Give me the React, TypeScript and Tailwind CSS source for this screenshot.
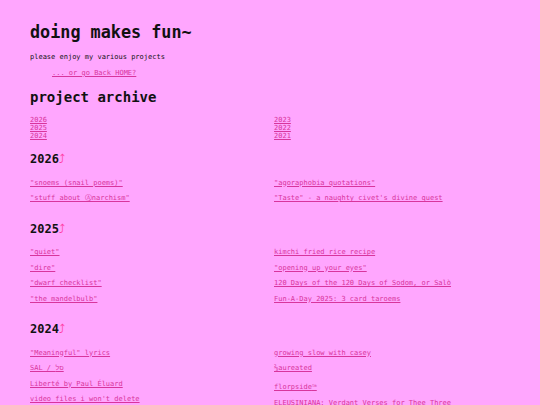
const link = 'text-[#d8359c] underline underline-offset-[1px] decoration-[1px]'

type Col = { text: React.ReactNode; extra?: string }[]

function YearSection({ year, left, right }: { year: string; left: Col; right: Col }) {
  return (
    <section className="mt-[19.5px]">
      <h2 className="text-[12px] leading-[14px] font-bold text-[#111]">
        {year}
        <a href="#top" className="text-[#ff3ea5] font-normal">⤴</a>
      </h2>
      <div className="mt-[12.5px] grid grid-cols-2 gap-x-[8px]">
        <ul className="flex flex-col gap-[7.5px]">
          {left.map((item, i) => (
            <li key={i} className={`text-[7px] leading-[8px] whitespace-nowrap ${item.extra ?? ''}`}>
              <a href="#" className={link}>{item.text}</a>
            </li>
          ))}
        </ul>
        <ul className="flex flex-col gap-[7.5px]">
          {right.map((item, i) => (
            <li key={i} className={`text-[7px] leading-[8px] whitespace-nowrap ${item.extra ?? ''}`}>
              <a href="#" className={link}>{item.text}</a>
            </li>
          ))}
        </ul>
      </div>
    </section>
  )
}

export default function App() {
  return (
    <div
      id="top"
      className="min-h-screen w-full bg-[#ffa6fe] px-[30px] pt-[22px] pb-10 text-[#111]"
      style={{ fontFamily: '"DejaVu Sans Mono", "Liberation Mono", monospace' }}
    >
      <h1 className="text-[16.8px] leading-[20px] font-bold">doing makes fun~</h1>
      <p className="mt-[11px] text-[7px] leading-[8px]">please enjoy my various projects</p>
      <p className="mt-[8px] pl-[22px] text-[7px] leading-[8px]">
        <a href="#" className={link}>... or go Back HOME?</a>
      </p>

      <h2 className="mt-[12px] text-[14px] leading-[16px] font-bold">project archive</h2>
      <div className="mt-[11px] grid grid-cols-2 gap-x-[8px] text-[7px] leading-[8px]">
        <div className="flex flex-col">
          <a href="#" className={`${link} w-fit`}>2026</a>
          <a href="#" className={`${link} w-fit`}>2025</a>
          <a href="#" className={`${link} w-fit`}>2024</a>
        </div>
        <div className="flex flex-col">
          <a href="#" className={`${link} w-fit`}>2023</a>
          <a href="#" className={`${link} w-fit`}>2022</a>
          <a href="#" className={`${link} w-fit`}>2021</a>
        </div>
      </div>

      <div className="-mt-[7.5px]">
        <YearSection
          year="2026"
          left={[{ text: '"snoems (snail poems)"' }, { text: '"stuff about Ⓐnarchism"' }]}
          right={[{ text: '"agoraphobia quotations"' }, { text: '"Taste" - a naughty civet\'s divine quest' }]}
        />
        <YearSection
          year="2025"
          left={[
            { text: '"quiet"' },
            { text: '"dire"' },
            { text: '"dwarf checklist"' },
            { text: '"the mandelbulb"' },
          ]}
          right={[
            { text: 'kimchi fried rice recipe' },
            { text: '"opening up your eyes"' },
            { text: '120 Days of the 120 Days of Sodom, or Salò' },
            { text: 'Fun-A-Day 2025: 3 card taroems' },
          ]}
        />
        <YearSection
          year="2024"
          left={[
            { text: '"Meaningful" lyrics' },
            { text: 'SAL / סל' },
            { text: 'Liberté by Paul Éluard' },
            { text: "video files i won't delete" },
          ]}
          right={[
            { text: 'growing slow with casey' },
            { text: '⅔aureated' },
            {
              text: (
                <>
                  florpside<sup className="text-[4px]">tm</sup>
                </>
              ),
              extra: 'mt-[3.5px]',
            },
            { text: 'ELEUSINIANA: Verdant Verses for Thee Three' },
          ]}
        />
      </div>
    </div>
  )
}
